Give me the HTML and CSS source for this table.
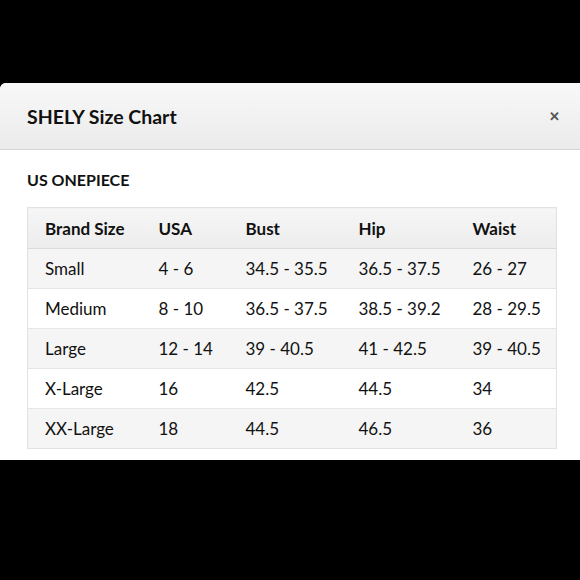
FILE: index.html
```html
<!DOCTYPE html>
<html>
<head>
<meta charset="utf-8">
<link rel="stylesheet" href="styles.css">
</head>
<body>
<div class="dialog">
  <div class="dialog-header">
    <h1 class="title">SHELY Size Chart</h1>
    <span class="close">&#x2715;</span>
  </div>
  <div class="dialog-body">
    <h2 class="subtitle">US ONEPIECE</h2>
    <table class="chart">
      <colgroup>
        <col class="c1"><col class="c2"><col class="c3"><col class="c4"><col class="c5">
      </colgroup>
      <thead>
        <tr><th>Brand Size</th><th>USA</th><th>Bust</th><th>Hip</th><th>Waist</th></tr>
      </thead>
      <tbody>
        <tr><td>Small</td><td>4 - 6</td><td>34.5 - 35.5</td><td>36.5 - 37.5</td><td>26 - 27</td></tr>
        <tr><td>Medium</td><td>8 - 10</td><td>36.5 - 37.5</td><td>38.5 - 39.2</td><td>28 - 29.5</td></tr>
        <tr><td>Large</td><td>12 - 14</td><td>39 - 40.5</td><td>41 - 42.5</td><td>39 - 40.5</td></tr>
        <tr><td>X-Large</td><td>16</td><td>42.5</td><td>44.5</td><td>34</td></tr>
        <tr><td>XX-Large</td><td>18</td><td>44.5</td><td>46.5</td><td>36</td></tr>
      </tbody>
    </table>
  </div>
</div>
</body>
</html>
```

FILE: styles.css
```css
html, body {
  margin: 0;
  padding: 0;
  background: #000;
  width: 580px;
  height: 580px;
  overflow: hidden;
}
body {
  font-family: Lato, "Open Sans", sans-serif;
  color: #111;
}
.dialog {
  margin-top: 83px;
  width: 580px;
  height: 377px;
  background: #fff;
  border-radius: 6px 0 0 0;
  overflow: hidden;
}
.dialog-header {
  height: 66px;
  background: linear-gradient(#f8f8f8, #ebebeb);
  border-bottom: 1px solid #d4d4d4;
  display: flex;
  align-items: center;
  justify-content: space-between;
  padding: 0 20px 0 27px;
}
.title {
  margin: 0;
  font-size: 19.5px;
  font-weight: 700;
  color: #111;
}
.close {
  font-size: 13px;
  font-weight: 700;
  color: #555;
}
.dialog-body {
  padding: 20px 24px 0 27px;
}
.subtitle {
  margin: 0 0 17px;
  font-size: 16px;
  font-weight: 700;
  line-height: 20px;
  color: #111;
}
.chart {
  border-collapse: collapse;
  table-layout: fixed;
  width: 529px;
  border: 1px solid #e2e2e2;
  font-size: 17px;
}
.c1 { width: 114px; }
.c2 { width: 87px; }
.c3 { width: 113px; }
.c4 { width: 114px; }
.c5 { width: 101px; }
.chart th {
  text-align: left;
  font-weight: 700;
  height: 40px;
  padding: 0 0 0 17px;
  background: linear-gradient(#f6f6f6, #ececec);
  border-bottom: 1px solid #dcdcdc;
}
.chart td {
  height: 39px;
  padding: 0 0 0 17px;
  border-top: 1px solid #e6e6e6;
  white-space: nowrap;
}
.chart tbody tr:nth-child(odd) td {
  background: #f5f5f5;
}
.chart tbody tr:nth-child(even) td {
  background: #fff;
}
```
